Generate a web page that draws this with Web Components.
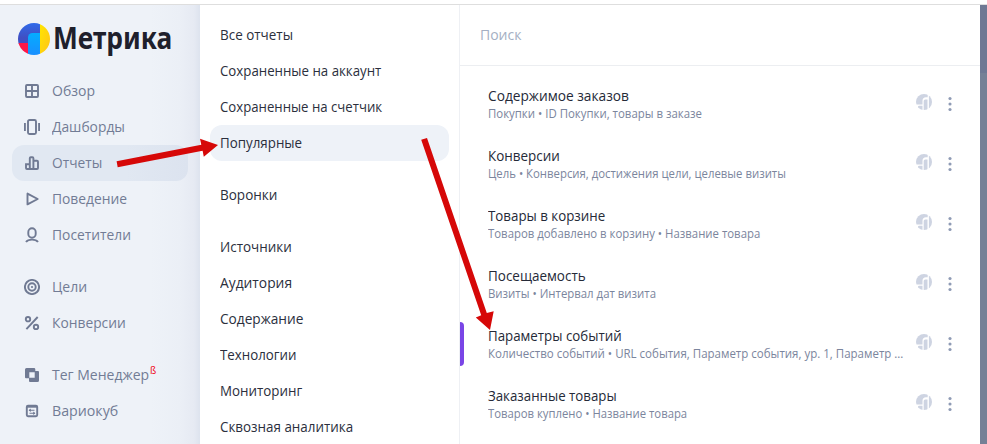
<!DOCTYPE html>
<html lang="ru">
<head>
<meta charset="utf-8">
<title>Метрика</title>
<style>
html,body{margin:0;height:444px;overflow:hidden;background:#fff}
body{font-family:"Open Sans","Noto Sans",sans-serif;font-size:14px;color:#2b2f3d}
</style>
</head>
<body>
<metrika-app></metrika-app>
<script>
const define=(name,cls)=>customElements.define(name,cls);

/* One line of text set to a given advance width */
define('fit-text',class extends HTMLElement{
  connectedCallback(){
    const r=this.attachShadow({mode:'open'});
    r.innerHTML='<style>:host{display:block;white-space:nowrap}span{display:inline-block;transform-origin:0 50%}</style><span><slot></slot></span>';
    const s=r.querySelector('span'),w=+this.getAttribute('w');
    const n=s.offsetWidth;
    this.style.width=w+'px';
    if(n)s.style.transform='scaleX('+(w/n)+')';
  }
});

const icons={
 grid:'<rect x="2" y="2" width="12" height="12" rx="1"/><path d="M8 2v12M2 8h12"/>',
 dash:'<rect x="4" y="1" width="8" height="14" rx="1.5"/><path d="M.9 4v8M15.1 4v8"/>',
 bars:'<path d="M2 9.2h3.8V14H3a1 1 0 0 1-1-1zM5.8 14V3.2a1 1 0 0 1 1-1h1.6a1 1 0 0 1 1 1V14zM9.4 5.8h3.6a1 1 0 0 1 1 1V13a1 1 0 0 1-1 1H9.4"/>',
 play:'<path d="M3.5 2.6v10.8L13.7 8z" stroke-linejoin="round"/>',
 user:'<rect x="4.3" y="1.3" width="7.4" height="9.4" rx="3.7"/><path d="M2 15c1.2-1.7 3.2-2.4 6-2.4s4.8.7 6 2.4"/>',
 target:'<circle cx="8" cy="8" r="7.1"/><circle cx="8" cy="8" r="3.7"/><circle cx="8" cy="8" r="1.1" fill="currentColor" stroke="none"/>',
 percent:'<circle cx="4" cy="4.2" r="2.2"/><circle cx="12" cy="11.9" r="2.2"/><path d="M2.4 14.2 13.7 2"/>',
 tag:'<path fill="currentColor" stroke="none" fill-rule="evenodd" d="M2.5 1H10a1.3 1.3 0 0 1 1.3 1.3V4H14a1 1 0 0 1 1 1v8.500a1.500 1.500 0 0 1-1.500 1.500H6a1 1 0 0 1-1-1v-2.700H2a1 1 0 0 1-1-1V2.500A1.500 1.500 0 0 1 2.500 1zM5.300 5.300v5.400h5.400V5.300z"/>',
 cube:'<rect x="2.8" y="2.8" width="10.4" height="10.4" rx="1.2"/><path d="M2.8 3.800h10.400" stroke-width="1.800"/><path d="M5 7.300h5.500M5.500 10.200H11" stroke-width="1.100"/><path d="M4.600 7.300 6.800 5.500v3.600zM11.400 10.200 9.200 8.400v3.600z" fill="currentColor" stroke="none"/>'
};
define('nav-icon',class extends HTMLElement{
  connectedCallback(){
    this.attachShadow({mode:'open'}).innerHTML='<style>:host{display:block;width:16px;height:16px;color:#707a93}svg{display:block}</style><svg width="16" height="16" viewBox="0 0 16 16" fill="none" stroke="currentColor" stroke-width="1.9">'+icons[this.getAttribute('name')]+'</svg>';
  }
});

define('nav-item',class extends HTMLElement{
  connectedCallback(){
    const a=n=>this.getAttribute(n);
    this.attachShadow({mode:'open'}).innerHTML=`<style>
    :host{display:flex;align-items:center;height:36px;width:176px;box-sizing:border-box;padding-left:12px;gap:12px;border-radius:12px;color:#727c95}
    :host([active]){background:linear-gradient(90deg,#e1e8f2 65%,#dce3ef)}
    :host([gap]){margin-top:16px}
    fit-text{padding-bottom:2px}
    sup{color:#f00010;font-size:10px;line-height:9px;align-self:flex-start;margin:9px 0 0 -11px}
    </style><nav-icon name="${a('icon')}"></nav-icon><fit-text w="${a('w')}">${a('label')}</fit-text>${a('mark')?'<sup>'+a('mark')+'</sup>':''}`;
  }
});

define('metrika-logo',class extends HTMLElement{
  connectedCallback(){
    this.attachShadow({mode:'open'}).innerHTML=`<style>
    :host{display:flex;align-items:center;gap:3px;height:36px;padding-left:18px;color:#1e202c;font:700 31px/36px "Noto Sans","Open Sans",sans-serif}
    fit-text{padding-bottom:4px}
    svg{display:block}</style>
    <svg width="32" height="32" viewBox="0 0 32 32"><defs><clipPath id="c"><circle cx="16" cy="16" r="16"/></clipPath>
    <linearGradient id="b" x2="0" y2="1"><stop stop-color="#306bea"/><stop offset=".7" stop-color="#404fc3"/></linearGradient>
    <linearGradient id="s" x2="0" y2="1"><stop stop-color="#04adff"/><stop offset="1" stop-color="#198fff"/></linearGradient>
    <linearGradient id="y" x2="1" y2="1"><stop stop-color="#ffe600"/><stop offset="1" stop-color="#ffc219"/></linearGradient></defs>
    <g clip-path="url(#c)"><path fill="url(#b)" d="M0 0h22v21H0z"/><path fill="#ff1748" d="M0 20h10v12H0z"/><path fill="url(#y)" d="M22 0h10v32H22z"/><path fill="url(#s)" d="M10 32V14.500A4.500 4.500 0 0 1 14.500 10H22v22z"/></g></svg>
    <fit-text w="119">Метрика</fit-text>`;
  }
});

define('side-nav',class extends HTMLElement{
  connectedCallback(){
    const rows=[['grid','Обзор',43],['dash','Дашборды',73],['bars','Отчеты',50,'active'],['play','Поведение',75],['user','Посетители',79],['target','Цели',35,'gap'],['percent','Конверсии',74],['tag','Тег Менеджер',97,'gap mark="ß"'],['cube','Вариокуб',66]];
    this.attachShadow({mode:'open'}).innerHTML=`<style>
    :host{display:block;width:200px;box-sizing:border-box;padding-top:16px;background:linear-gradient(90deg,#eef2f8 0,#eef2f8 75%,#ebeff6 90%,#e6eaf3 97%,#dde3ee 100%)}
    nav{padding:16px 0 0 12px}</style><metrika-logo></metrika-logo><nav>${rows.map(([i,l,w,x=''])=>`<nav-item icon="${i}" label="${l}" w="${w}" ${x}></nav-item>`).join('')}</nav>`;
  }
});

define('menu-item',class extends HTMLElement{
  connectedCallback(){
    this.attachShadow({mode:'open'}).innerHTML=`<style>
    :host{display:flex;align-items:center;height:36px;padding-left:10px;border-radius:12px}
    fit-text{padding-bottom:2px}
    :host([active]){background:#eef2f8}:host([gap]){margin-top:16px}</style><fit-text w="${this.getAttribute('w')}"><slot></slot></fit-text>`;
  }
});

define('report-menu',class extends HTMLElement{
  connectedCallback(){
    const rows=[['Все отчеты',73],['Сохраненные на аккаунт',161],['Сохраненные на счетчик',162],['Популярные',82,'active'],['Воронки',57,'gap'],['Источники',72,'gap'],['Аудитория',72],['Содержание',83],['Технологии',76],['Мониторинг',82],['Сквозная аналитика',133]];
    this.attachShadow({mode:'open'}).innerHTML=`<style>:host{display:block;width:260px;box-sizing:border-box;padding:12px 10px 0 10px;border-right:1px solid #eef0f4}</style>${rows.map(([l,w,x=''])=>`<menu-item w="${w}" ${x}>${l}</menu-item>`).join('')}`;
  }
});

define('report-row',class extends HTMLElement{
  connectedCallback(){
    const a=n=>this.getAttribute(n);
    this.attachShadow({mode:'open'}).innerHTML=`<style>
    :host{display:flex;height:60px;align-items:center}
    i{width:4px;height:44px;border-radius:0 4px 4px 0;margin-right:24px;flex:none}
    :host([active]) i{background:#7a45e6}
    .text{width:428px}
    .title{font-size:14px;line-height:20px;color:#252a38}
    .sub{font-size:12px;line-height:16px;color:#7b859d}
    svg{display:block;margin-top:-4px;overflow:visible}</style><i></i>
    <div class="text"><fit-text class="title" w="${a('w')}">${a('label')}</fit-text><fit-text class="sub" w="${a('sw')}">${a('sub')}</fit-text></div>
    <svg width="40" height="16" viewBox="0 0 40 16"><defs><clipPath id="o"><circle cx="8" cy="8" r="8"/></clipPath></defs><g clip-path="url(#o)" fill="#ced4e2"><path d="M0 0h11.700v3.200H10a3.500 3.500 0 0 0-3.500 3.500v3.800H0zM12.900 0H16v16h-3.100zM7.700 7A1.500 1.500 0 0 1 9.200 5.500h2.300V16H7.700zM2 12.900a1.200 1.200 0 0 1 1.200-1.200h3.300V16H2z"/></g><g fill="#8f9bb5"><circle cx="34" cy="4.500" r="1.550"/><circle cx="34" cy="10" r="1.550"/><circle cx="34" cy="15.500" r="1.550"/></g></svg>`;
  }
});

define('search-field',class extends HTMLElement{
  connectedCallback(){
    this.attachShadow({mode:'open'}).innerHTML='<style>:host{display:flex;align-items:center;height:61px;box-sizing:border-box;padding-left:20px;border-bottom:1px solid #eceef1;color:#a5afc3}fit-text{padding-bottom:2px}</style><fit-text w="41"><slot></slot></fit-text>';
  }
});

define('report-list',class extends HTMLElement{
  connectedCallback(){
    const rows=[['Содержимое заказов',141,'Покупки • ID Покупки, товары в заказе',214],['Конверсии',72,'Цель • Конверсия, достижения цели, целевые визиты',298],['Товары в корзине',117,'Товаров добавлено в корзину • Название товара',272],['Посещаемость',98,'Визиты • Интервал дат визита',168],['Параметры событий',134,'Количество событий • URL события, Параметр события, ур. 1, Параметр ...',415,'active'],['Заказанные товары',129,'Товаров куплено • Название товара',199]];
    this.attachShadow({mode:'open'}).innerHTML=`<style>:host{display:block;width:520px}section{padding-top:8px}</style><search-field>Поиск</search-field><section>${rows.map(([l,w,s,sw,x=''])=>`<report-row label="${l}" w="${w}" sub="${s}" sw="${sw}" ${x}></report-row>`).join('')}</section>`;
  }
});

define('guide-arrows',class extends HTMLElement{
  connectedCallback(){
    this.attachShadow({mode:'open'}).innerHTML='<style>:host{position:absolute;inset:0;pointer-events:none}svg{display:block}</style><svg width="987" height="444" fill="#d60808"><path d="M116.600 161.300 201.300 144.800 200 138.800 218 145 203.800 156.700 202.600 150.800 117.700 167.300zM421.200 139.800 427 138 486.800 313.100 493.700 311.200 490 330 475.800 317.400 481.200 315.200z"/></svg>';
  }
});

define('metrika-app',class extends HTMLElement{
  connectedCallback(){
    this.attachShadow({mode:'open'}).innerHTML=`<style>
    :host{display:block;position:relative;width:987px;height:444px;overflow:hidden}
    header{height:4px;border-bottom:1px solid #dedede}
    main{display:flex;height:439px}
    aside{width:7px;background:linear-gradient(#6e7894 0 68px,#758096 68px)}</style>
    <header></header><main><side-nav></side-nav><report-menu></report-menu><report-list></report-list><aside></aside></main><guide-arrows></guide-arrows>`;
  }
});
</script>
</body>
</html>
